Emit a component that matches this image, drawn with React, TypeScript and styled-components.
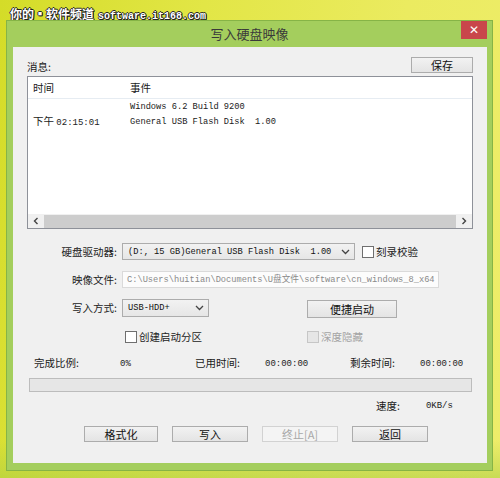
import React from 'react';
import styled, { createGlobalStyle } from 'styled-components';

const GlobalStyle = createGlobalStyle`
  html, body { margin: 0; padding: 0; overflow: hidden; }
  body { font-family: "Noto Sans CJK SC", "Liberation Sans", sans-serif; }
`;

const cjk = `"Noto Sans CJK SC", "Liberation Sans", sans-serif`;
const mono = `"Liberation Mono", "Noto Sans CJK SC", monospace`;

const Page = styled.div`
  width: 500px;
  height: 478px;
  overflow: hidden;
  display: flex;
  flex-direction: column;
  background:
    linear-gradient(to bottom, rgba(0, 0, 0, 0) 440px, rgba(170, 205, 70, 0.55) 478px),
    linear-gradient(100deg, #d4dc28 0%, #e2e646 35%, #ebeb60 70%, #eeed6a 100%);
`;

const Watermark = styled.div`
  height: 20px;
  box-sizing: border-box;
  padding: 7px 0 0 10px;
  font: bold 12px/13px ${cjk};
  color: #fff;
  white-space: nowrap;
  text-shadow: 1px 0 0 #222, -1px 0 0 #222, 0 1px 0 #222, 0 -1px 0 #222, 1px 1px 0 #222;
`;

const Site = styled.span`
  font: bold 10px/13px ${mono};
  margin-left: 4px;
`;

const Window = styled.div`
  margin-left: 6px;
  width: 487px;
  height: 451px;
  box-sizing: border-box;
  border: 1px solid #86b446;
  background: #a4ce5d;
  display: flex;
  flex-direction: column;
`;

const TitleBar = styled.div`
  height: 26px;
  display: grid;
  grid-template-columns: 1fr auto 1fr;
  align-items: start;
`;

const Title = styled.div`
  grid-column: 2;
  font: 13px/25px ${cjk};
  color: #3a3a3a;
`;

const CloseButton = styled.div`
  grid-column: 3;
  justify-self: end;
  margin-right: 5px;
  width: 26px;
  height: 18px;
  background: #c9464b;
  color: #fff;
  font: bold 12px/18px "DejaVu Sans", sans-serif;
  text-align: center;
`;

const Client = styled.div`
  margin: 0 5px 0 6px;
  height: 416px;
  background: #f0f0f0;
  box-sizing: border-box;
  padding: 0 14px;
  display: flex;
  flex-direction: column;
  font: 10.5px/12px ${cjk};
  color: #1a1a1a;
`;

const TopRow = styled.div`
  margin-top: 10px;
  height: 16px;
  display: flex;
  align-items: center;
  justify-content: space-between;
`;

const Caption = styled.span`
  padding-top: 4px;
`;

const Button = styled.div<{ $w: number; $h?: number; $disabled?: boolean }>`
  width: ${p => p.$w}px;
  height: ${p => p.$h ?? 16}px;
  box-sizing: border-box;
  border: 1px solid ${p => (p.$disabled ? '#d2d2d2' : '#acacac')};
  background: ${p => (p.$disabled ? '#f4f4f4' : 'linear-gradient(#f2f2f2, #e4e4e4)')};
  color: ${p => (p.$disabled ? '#a8a8a8' : '#111')};
  display: flex;
  align-items: center;
  justify-content: center;
  font: 11px/12px ${cjk};
  flex-shrink: 0;
`;

const ListBox = styled.div`
  margin-top: 3px;
  height: 153px;
  box-sizing: border-box;
  border: 1px solid #8e9199;
  background: #fff;
  display: flex;
  flex-direction: column;
`;

const ListHeader = styled.div`
  height: 21px;
  flex-shrink: 0;
  border-bottom: 1px solid #e6ecf2;
  display: flex;
  align-items: center;
  font: 10.5px/12px ${cjk};
`;

const TimeCol = styled.div`
  width: 97px;
  padding-left: 5px;
  flex-shrink: 0;
`;

const ListBody = styled.div`
  flex: 1;
  padding-top: 0px;
`;

const ListRow = styled.div`
  height: 15px;
  display: flex;
  align-items: center;
`;

const MonoText = styled.span`
  font: 8.7px/12px ${mono};
  white-space: pre;
`;

const HScroll = styled.div`
  height: 14px;
  flex-shrink: 0;
  background: #f0f0f0;
  display: flex;
  align-items: center;
`;

const ScrollArrow = styled.div`
  width: 16px;
  height: 14px;
  display: flex;
  align-items: center;
  justify-content: center;
  color: #555;
`;

const ScrollThumb = styled.div`
  flex: 1;
  height: 13px;
  background: #cdcdcd;
`;

const FormRow = styled.div<{ $top: number; $h: number }>`
  margin-top: ${p => p.$top}px;
  height: ${p => p.$h}px;
  display: flex;
  align-items: center;
`;

const Label = styled.div`
  width: 90px;
  padding-right: 5px;
  text-align: right;
  flex-shrink: 0;
  font: 10.5px/12px ${cjk};
  color: #222;
`;

const Select = styled.div<{ $w: number; $h: number }>`
  width: ${p => p.$w}px;
  height: ${p => p.$h}px;
  box-sizing: border-box;
  border: 1px solid #acacac;
  background: linear-gradient(#f2f2f2, #e6e6e6);
  display: flex;
  align-items: center;
  padding: 0 4px 0 5px;
  flex-shrink: 0;
`;

const SelectText = styled(MonoText)`
  flex: 1;
  overflow: hidden;
  color: #111;
`;

const TextInput = styled.div`
  width: 317px;
  height: 17px;
  box-sizing: border-box;
  border: 1px solid #dadada;
  background: #fcfcfc;
  padding: 0 4px;
  display: flex;
  align-items: center;
  overflow: hidden;
  color: #8a8a8a;
`;

const Check = styled.div<{ $disabled?: boolean }>`
  display: flex;
  align-items: center;
  gap: 2px;
  color: ${p => (p.$disabled ? '#a4a4a4' : '#222')};
  font: 10.5px/12px ${cjk};
`;

const Box = styled.span<{ $disabled?: boolean }>`
  width: 12px;
  height: 12px;
  box-sizing: border-box;
  border: 1px solid ${p => (p.$disabled ? '#c6c6c6' : '#6f6f6f')};
  background: ${p => (p.$disabled ? '#e6e6e6' : '#fff')};
`;

const StatRow = styled.div`
  margin-top: 14px;
  height: 12px;
  display: flex;
  align-items: center;
  padding-left: 7px;
`;

const StatCell = styled.div<{ $w: number }>`
  width: ${p => p.$w}px;
  flex-shrink: 0;
`;

const NumText = styled.span`
  font: 9px/12px ${mono};
  color: #222;
`;

const ProgressBar = styled.div`
  margin: 9px 0 0 2px;
  width: 443px;
  height: 14px;
  box-sizing: border-box;
  border: 1px solid #bcbcbc;
  background: #e6e6e6;
`;

const SpeedRow = styled.div`
  margin-top: 8px;
  height: 12px;
  display: flex;
  align-items: center;
  padding-left: 349px;
  gap: 26px;
`;

const ButtonRow = styled.div`
  margin-top: 14px;
  display: flex;
  gap: 14px;
  padding-left: 57px;
`;

const Chevron = () => (
  <svg width="9" height="6" viewBox="0 0 9 6">
    <path d="M1 1 L4.5 4.5 L8 1" fill="none" stroke="#444" strokeWidth="1.3" />
  </svg>
);

const Arrow = ({ dir }: { dir: 'l' | 'r' }) => (
  <svg width="6" height="8" viewBox="0 0 6 8">
    <path
      d={dir === 'l' ? 'M4.5 1 L1.5 4 L4.5 7' : 'M1.5 1 L4.5 4 L1.5 7'}
      fill="none"
      stroke="#444"
      strokeWidth="1.4"
    />
  </svg>
);

export default function App() {
  return (
    <Page>
      <GlobalStyle />
      <Watermark>
        你的▪软件频道<Site>software.it168.com</Site>
      </Watermark>
      <Window>
        <TitleBar>
          <Title>写入硬盘映像</Title>
          <CloseButton>✕</CloseButton>
        </TitleBar>
        <Client>
          <TopRow>
            <Caption>消息:</Caption>
            <Button $w={62}>保存</Button>
          </TopRow>
          <ListBox>
            <ListHeader>
              <TimeCol>时间</TimeCol>
              <span>事件</span>
            </ListHeader>
            <ListBody>
              <ListRow>
                <TimeCol />
                <MonoText>Windows 6.2 Build 9200</MonoText>
              </ListRow>
              <ListRow>
                <TimeCol>
                  下午 <NumText>02:15:01</NumText>
                </TimeCol>
                <MonoText>General USB Flash Disk  1.00</MonoText>
              </ListRow>
            </ListBody>
            <HScroll>
              <ScrollArrow><Arrow dir="l" /></ScrollArrow>
              <ScrollThumb />
              <ScrollArrow><Arrow dir="r" /></ScrollArrow>
            </HScroll>
          </ListBox>

          <FormRow $top={14} $h={17}>
            <Label>硬盘驱动器:</Label>
            <Select $w={233} $h={17}>
              <SelectText>(D:, 15 GB)General USB Flash Disk  1.00</SelectText>
              <Chevron />
            </Select>
            <Check style={{ marginLeft: 7 }}>
              <Box />
              刻录校验
            </Check>
          </FormRow>

          <FormRow $top={11} $h={17}>
            <Label>映像文件:</Label>
            <TextInput>
              <MonoText>C:\Users\huitian\Documents\U盘文件\software\cn_windows_8_x64</MonoText>
            </TextInput>
          </FormRow>

          <FormRow $top={10} $h={20}>
            <Label>写入方式:</Label>
            <Select $w={87} $h={18}>
              <SelectText>USB-HDD+</SelectText>
              <Chevron />
            </Select>
            <Button $w={90} $h={18} style={{ marginLeft: 98, marginTop: 2 }}>
              便捷启动
            </Button>
          </FormRow>

          <FormRow $top={13} $h={12}>
            <Check style={{ marginLeft: 98 }}>
              <Box />
              创建启动分区
            </Check>
            <Check $disabled style={{ marginLeft: 105 }}>
              <Box $disabled />
              深度隐藏
            </Check>
          </FormRow>

          <StatRow>
            <StatCell $w={86}>完成比例:</StatCell>
            <StatCell $w={75}><NumText>0%</NumText></StatCell>
            <StatCell $w={70}>已用时间:</StatCell>
            <StatCell $w={85}><NumText>00:00:00</NumText></StatCell>
            <StatCell $w={70}>剩余时间:</StatCell>
            <StatCell $w={50}><NumText>00:00:00</NumText></StatCell>
          </StatRow>

          <ProgressBar />

          <SpeedRow>
            <span>速度:</span>
            <NumText>0KB/s</NumText>
          </SpeedRow>

          <ButtonRow>
            <Button $w={74}>格式化</Button>
            <Button $w={76}>写入</Button>
            <Button $w={76} $disabled>终止[A]</Button>
            <Button $w={76}>返回</Button>
          </ButtonRow>
        </Client>
      </Window>
    </Page>
  );
}
